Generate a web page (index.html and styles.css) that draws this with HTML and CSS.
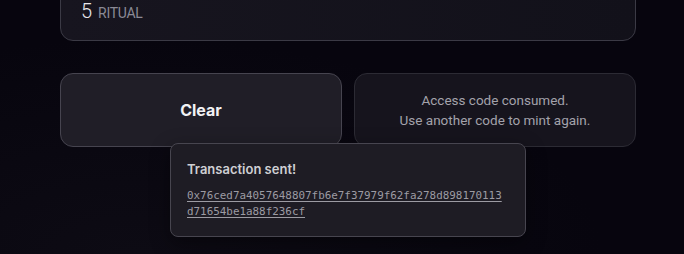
FILE: index.html
```html
<!DOCTYPE html>
<html>
<head>
<meta charset="utf-8">
<link rel="stylesheet" href="styles.css">
</head>
<body>
<main class="page">
  <section class="supply-card">
    <div class="supply-line"><span class="supply-num">5</span><span class="supply-unit">RITUAL</span></div>
  </section>
  <div class="actions">
    <button class="btn-clear">Clear</button>
    <div class="notice">Access code consumed.<br>Use another code to mint again.</div>
  </div>
  <div class="toast">
    <div class="toast-title">Transaction sent!</div>
    <a class="toast-hash" href="#">0x76ced7a4057648807fb6e7f37979f62fa278d898170113d71654be1a88f236cf</a>
  </div>
</main>
</body>
</html>
```
FILE: styles.css
```css
html, body {
  margin: 0;
  height: 100%;
}
body {
  background: radial-gradient(ellipse at 20% 100%, #0d0b14 0%, #07050e 60%), #07050e;
  font-family: Roboto, "Noto Sans", sans-serif;
  overflow: hidden;
}
.page {
  display: flow-root;
  position: relative;
  width: 576px;
  margin-left: 60px;
}
.supply-card {
  margin-top: -42px;
  padding: 40px 20px 17px;
  border: 1px solid #3b3a45;
  border-radius: 13px;
  background: linear-gradient(90deg, #17151f, #12111a);
}
.supply-line {
  height: 24px;
  line-height: 24px;
  display: flex;
  align-items: baseline;
  gap: 6px;
}
.supply-num {
  font-size: 20px;
  color: #e8e8ec;
  font-weight: 300;
}
.supply-unit {
  font-size: 14px;
  letter-spacing: -0.3px;
  color: #8b8a95;
}
.actions {
  margin-top: 32px;
  display: grid;
  grid-template-columns: 1fr 1fr;
  gap: 12px;
}
.btn-clear {
  height: 74px;
  border: 1px solid #46444f;
  border-radius: 13px;
  background: #201e27;
  color: #f2f2f4;
  font-family: Inter, sans-serif;
  font-weight: 700;
  font-size: 16px;
}
.notice {
  height: 74px;
  box-sizing: border-box;
  border: 1px solid #2c2b34;
  border-radius: 13px;
  background: #16141d;
  color: #a3a2ab;
  font-size: 13.5px;
  line-height: 20px;
  text-align: center;
  display: flex;
  align-items: center;
  justify-content: center;
}
.toast {
  position: absolute;
  left: 110px;
  top: 143px;
  width: 356px;
  box-sizing: border-box;
  padding: 15px 20px 16px 16px;
  border: 1px solid #47454f;
  border-radius: 8px;
  background: #1e1c24;
  box-shadow: 0 6px 20px rgba(0,0,0,0.4);
}
.toast-title {
  font-family: Inter, sans-serif;
  font-weight: 600;
  font-size: 13px;
  line-height: 20px;
  color: #cfcfd3;
  margin-bottom: 9px;
}
.toast-hash {
  display: block;
  font-family: "DejaVu Sans Mono", monospace;
  font-size: 10.9px;
  line-height: 16px;
  color: #9c9ba3;
  word-break: break-all;
  text-decoration: underline;
  text-underline-offset: 2px;
}
```
